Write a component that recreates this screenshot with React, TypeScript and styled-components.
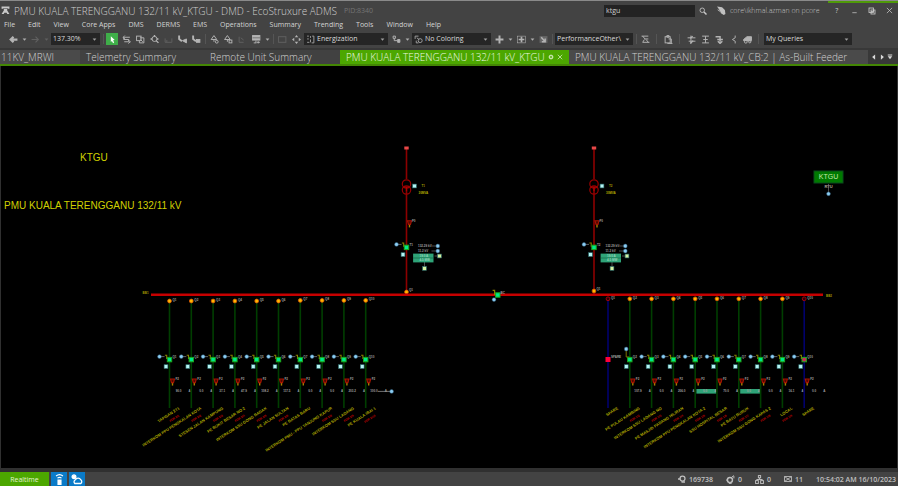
import React from 'react';
import styled, { createGlobalStyle, css } from 'styled-components';

const GlobalStyle = createGlobalStyle`
  * { box-sizing: border-box; }
  html, body { margin: 0; background: #434343; }
  body, button, input, select {
    font-family: 'Open Sans', 'Noto Sans', sans-serif;
    font-size: 7px;
    color: #c8c8c8;
  }
  button, input, select { border: 0; padding: 0; margin: 0; background: none; outline: none; }
`;

const Window = styled.div`
  display: flex;
  flex-direction: column;
  min-height: 100vh;
  background: #434343;
  border-top: 1px solid #8a8a8a;
`;

const TitleBar = styled.header`
  display: flex;
  align-items: center;
  height: 19px;
  padding-left: 0;
`;
const AppIcon = styled.span`
  display: flex;
  width: 14px;
  padding-left: 1px;
`;
const Title = styled.h1`
  margin: 0;
  font-size: 10px;
  line-height: 18px;
  font-weight: 300;
  color: #d0d0d0;
  white-space: nowrap;
`;
const ProcessId = styled.span`
  margin-left: 7px;
  color: #747474;
`;
const TitleRight = styled.div`
  display: flex;
  align-items: center;
  align-self: stretch;
  margin-left: auto;
`;
const SearchInput = styled.input`
  width: 91px;
  height: 12px;
  padding-left: 2px;
  background: #232323;
  color: #d0d0d0;
`;
const SearchButton = styled.button`
  display: flex;
  justify-content: center;
  width: 15px;
`;
const UserInfo = styled.div`
  display: flex;
  align-items: center;
  gap: 4px;
  width: 111px;
  margin-left: 7px;
  font-weight: 300;
  color: #c0c0c0;
  white-space: nowrap;
`;
const WindowButtons = styled.div`
  display: grid;
  grid-template-columns: repeat(4, 1fr);
  align-self: stretch;
  width: 70px;
  border-top: 2px solid #4f9a08;
  padding-bottom: 2px;
`;
const WindowButton = styled.button`
  display: flex;
  align-items: center;
  justify-content: center;
`;

const MenuBar = styled.nav`
  display: flex;
  gap: 13px;
  height: 10px;
  padding-left: 4px;
`;
const MenuItem = styled.button`
  line-height: 10px;
  font-weight: 500;
  color: #d4d4d4;
  white-space: nowrap;
`;

const Toolbar = styled.div`
  display: flex;
  align-items: center;
  height: 18px;
  padding-left: 6px;
`;
const ToolButton = styled.button<{ $dim?: boolean; $on?: boolean }>`
  display: flex;
  flex: none;
  align-items: center;
  justify-content: center;
  width: 14px;
  height: 12px;
  color: ${p => (p.$dim ? '#606060' : '#b4b4b4')};
  ${p => p.$on && css`
    background: #3fae49;
    background-clip: content-box;
    padding: 0 1px;
    color: #ffffff;
  `}
`;
const CaretButton = styled.button<{ $dim?: boolean }>`
  display: flex;
  flex: none;
  align-items: center;
  justify-content: center;
  width: 8px;
  color: ${p => (p.$dim ? '#606060' : '#b0b0b0')};
`;
const Separator = styled.span<{ $wide?: boolean }>`
  flex: none;
  width: ${p => (p.$wide ? 9 : 4)}px;
  height: 10px;
  background: linear-gradient(#555, #555) center / 1px 100% no-repeat;
`;
const Combo = styled.label<{ $width: number }>`
  display: flex;
  flex: none;
  align-items: center;
  gap: 2px;
  width: ${p => p.$width}px;
  height: 12px;
  margin: 0 1px;
  padding: 0 3px 0 2px;
  background: #252525;
  color: #a0a0a0;
`;
const ComboSelect = styled.select`
  appearance: none;
  flex: 1;
  min-width: 0;
  height: 12px;
  line-height: 12px;
  color: #dadada;
`;

const TabStrip = styled.div`
  display: flex;
  height: 18px;
  padding-top: 2px;
  background: #383838;
  border-bottom: 2px solid #438604;
`;
const Tab = styled.button<{ $width: number; $look?: 'active' | 'light'; $flush?: boolean }>`
  display: flex;
  flex: none;
  align-items: center;
  width: ${p => p.$width}px;
  padding-left: ${p => (p.$flush ? 1 : 6)}px;
  font-size: 10px;
  font-weight: 300;
  line-height: 14px;
  white-space: nowrap;
  color: ${p => (p.$look === 'active' ? '#ecf8e0' : '#d0d0d0')};
  background: ${p => (p.$look === 'active' ? '#4ca700' : p.$look === 'light' ? '#4a4a4a' : '#414141')};
`;
const TabTools = styled.span`
  display: flex;
  gap: 3px;
  margin-left: auto;
  padding-right: 6px;
`;
const TabNav = styled.div`
  display: flex;
  align-items: center;
  gap: 2px;
  margin-left: auto;
  padding-right: 5px;
`;
const TabNavButton = styled.button`
  display: flex;
  color: #d8d8d8;
`;

const Canvas = styled.main`
  flex: 1;
  background: #000;
  border: solid #303030;
  border-width: 0 1px 4px 1px;
`;
const Diagram = styled.svg`
  display: block;
  width: 100%;
  height: auto;
  font-family: 'Liberation Sans', Arial, sans-serif;
`;

const StatusBar = styled.footer`
  display: flex;
  align-items: center;
  gap: 2px;
  height: 14px;
  padding-right: 2px;
`;
const Mode = styled.button`
  width: 49px;
  height: 14px;
  background: #4ca700;
  color: #e4f4d4;
`;
const BlueButton = styled.button`
  display: flex;
  align-items: center;
  justify-content: center;
  width: 16px;
  height: 14px;
  background: #0b7bc8;
  color: #fff;
`;
const StatusItems = styled.div`
  display: flex;
  align-items: center;
  gap: 13px;
  margin-left: auto;
  font-weight: 600;
  color: #c0c0c0;
`;
const StatusItem = styled.span`
  display: flex;
  align-items: center;
  gap: 3px;
  white-space: nowrap;
`;

const glyphs: Record<string, React.ReactNode> = {
  phone: <g fill="currentColor" stroke="none"><path d="M1 1h14v4h-3V4H4v1H1z" /><path d="M5 5h6v3l4 6h-4l-1-2H6l-1 2H1l4-6z" /></g>,
  search: <><circle cx="6.5" cy="6.5" r="4.5" /><path d="M10 10l5 5" strokeWidth="3" /></>,
  hat: <g fill="currentColor" stroke="none"><path d="M0 1l9 1 5 5 1 7-3 2-5-3-2-5z" /><path d="M0 6l4 1 2 4z" /></g>,
  minimize: <path d="M3 13h10" />,
  restore: <><rect x="2" y="2" width="9" height="9" /><rect x="6" y="6" width="8" height="8" /><path d="M6 9h5V6" /></>,
  close: <path d="M2 2l12 12M14 2L2 14" />,
  back: <path d="M15 8H4M8 3L3 8l5 5" strokeWidth="4" />,
  forward: <path d="M1 8h11M8 3l5 5-5 5" strokeWidth="2" />,
  caret: <path d="M2 5h12l-6 7z" fill="currentColor" stroke="none" />,
  left: <path d="M11 1v14L3 8z" fill="currentColor" stroke="none" />,
  right: <path d="M5 1v14l8-7z" fill="currentColor" stroke="none" />,
  list: <g fill="currentColor" stroke="none"><path d="M2 1h12v3H2zM2 6h12l-6 8z" /></g>,
  pointer: <path d="M5 2l7 7-3 .5 2 4-2 1-2-4-2 2z" fill="currentColor" stroke="none" />,
  swap: <path d="M14 4H3v4h9v4H4M5 1L2 4l3 3M11 9l4 3-4 3" />,
  layers: <><rect x="1" y="2" width="8" height="8" /><path d="M7 5h7v9H6v-4M8 8l4 4" /></>,
  zoom: <><circle cx="8" cy="7" r="4.5" /><path d="M8 0v3M1 7h3M12 7h3M11 10l4 4" strokeWidth="2.5" /></>,
  tray: <path d="M2 6v7h12V6M5 13V9" />,
  step: <><path d="M2 1v6l5 4" strokeWidth="3.4" /><path d="M8 10l7-3v7z" fill="currentColor" /></>,
  stepBox: <><path d="M2 1v6l5 4" strokeWidth="3.4" /><rect x="8" y="8" width="6" height="5" fill="currentColor" /></>,
  pin: <><path d="M7 1l5 7H2zM7 8v4" /><circle cx="12" cy="12" r="2.5" /></>,
  pinMinus: <><path d="M6 1l5 7H1zM6 8v4" /><rect x="9" y="9" width="5" height="5" /></>,
  bracket: <path d="M2 3v10h8M5 5l5 4" />,
  screen: <><rect x="1" y="1" width="13" height="8" fill="currentColor" /><path d="M1 5h13" stroke="#434343" strokeWidth="1" /><path d="M3 14h5M7 10v4M11 11v4M9 13h5" /></>,
  panel: <rect x="1" y="3" width="13" height="10" />,
  cross4: <g fill="currentColor" stroke="none"><path d="M8 0l3 4H5zM8 16l3-4H5zM0 8l4-3v6zM16 8l-4-3v6z" /></g>,
  grid: <><path d="M2 2h3M2 7h3M2 13h4M8 2v3M8 8v5M11 2h3v12h-4" /></>,
  nodes: <><path d="M2 2h4v4H2zM4 7v3h5" /><path d="M10 8h4v5h-4z" fill="currentColor" /></>,
  colors: <><path d="M2 7V2h6M5 5l4 3" /><circle cx="11" cy="10" r="3.5" /><path d="M4 10v4h4" /></>,
  plus: <path d="M8 1v14M1 8h14M5 8h6" strokeWidth="3.5" />,
  plusBox: <><rect x="1" y="2" width="14" height="12" strokeWidth="1" /><path d="M8 3v10M3 8h10" strokeWidth="3" /></>,
  arrowBox: <><rect x="1" y="2" width="14" height="12" fill="#666" stroke="none" /><path d="M4 4l7 8M11 6v6H5" strokeWidth="2.5" /></>,
  sigma: <path d="M1 2h12M3 2l4 5h6M6 8l-3 5h12M9 8l4 5" />,
  clip: <><rect x="2" y="3" width="9" height="11" /><path d="M5 1h4v3H5zM8 7h5v8M6 15h9" /></>,
  split: <><path d="M1 5h14M3 11h12M7 1v14" /><path d="M10 2l-4 4M11 10l-5 5" strokeWidth="2.5" /></>,
  beam: <path d="M2 2h12M2 14h12M8 2v12M4 8h8" />,
  drop: <path d="M1 3h8v9M4 8h10M5 11l4 4 4-4" strokeWidth="2.5" />,
  angle: <path d="M11 1v4L6 8l5 3v4" />,
  truck: <><path d="M1 8l6-5h8v7H1z" fill="currentColor" /><circle cx="5" cy="12" r="2.5" /><circle cx="12" cy="12" r="2" /></>,
  dot: <><circle cx="8" cy="8" r="5" strokeWidth="2.5" /><path d="M6 8h4" /></>,
  beacon: <><path d="M3 3q5-4 10 0M5 6q3-2 6 0" /><rect x="5" y="8" width="6" height="8" fill="currentColor" stroke="none" /></>,
  weather: <><path d="M5 14h8a3 3 0 0 0 0-5 4 4 0 0 0-7 0 3 3 0 0 0-1 5z" /><circle cx="4" cy="5" r="2.5" fill="currentColor" /></>,
  refresh: <><circle cx="9" cy="7" r="5" strokeWidth="2.5" /><path d="M0 8h5M7 14h7" strokeWidth="3" /></>,
  alarm: <><circle cx="7" cy="9" r="4.5" strokeWidth="2.5" /><path d="M10 4l4-3M0 9h3M14 2v4M5 15h5" /></>,
  tree: <><rect x="6" y="1" width="4" height="4" /><rect x="1" y="10" width="5" height="5" /><rect x="10" y="10" width="5" height="5" /><path d="M8 5v3M3 10V8h10v2" /></>,
  mail: <><path d="M1 3h14v10H1zM1 3l14 10M15 3L1 13" /></>,
};

function Glyph({ name, size = 10 }: { name: string; size?: number }) {
  return (
    <svg width={size} height={size} viewBox="0 0 16 16" fill="none" stroke="currentColor" strokeWidth="1.7" aria-hidden="true">
      {glyphs[name]}
    </svg>
  );
}

const menus = ['File', 'Edit', 'View', 'Core Apps', 'DMS', 'DERMS', 'EMS', 'Operations', 'Summary', 'Trending', 'Tools', 'Window', 'Help'];

function Tool({ icon, dim, on }: { icon: string; dim?: boolean; on?: boolean }) {
  return <ToolButton type="button" aria-label={icon} $dim={dim} $on={on}><Glyph name={icon} size={9} /></ToolButton>;
}
function Caret({ dim }: { dim?: boolean }) {
  return <CaretButton type="button" aria-label="More" $dim={dim}><Glyph name="caret" size={5} /></CaretButton>;
}
function Drop({ value, width, icon, label }: { value: string; width: number; icon?: string; label: string }) {
  return (
    <Combo $width={width}>
      {icon && <Glyph name={icon} size={9} />}
      <ComboSelect aria-label={label}><option>{value}</option></ComboSelect>
      <Glyph name="caret" size={5} />
    </Combo>
  );
}

const SPACING = 21.8;
const leftFeeders = [
  { name: 'TAPISAN 2T1', value: '90.0', tag: 'FDR 2/1' },
  { name: 'INTERKOM PPU PENGKALAN KOTA', value: '0.0', tag: 'FDR 2/2' },
  { name: 'STESEN JALAN KAMPUNG', value: '37.1', tag: 'FDR 2/3' },
  { name: 'PE BUKIT BESAR NO 2', value: '47.9', tag: 'FDR 2/4' },
  { name: 'INTERKOM SSU GONG BADAK', value: '108.2', tag: 'FDR 2/5' },
  { name: 'PE JALAN SULTAN', value: '117.5', tag: 'FDR 2/6' },
  { name: 'PE BATAS BARU', value: '0.0', tag: '' },
  { name: 'INTERKOM PMU - PPU TANJUNG KAPUR', value: '0.0', tag: 'FDR 2/8' },
  { name: 'INTERKOM SSU LADANG', value: '203.2', tag: 'FDR 2/9' },
  { name: 'PE KUALA IBAI 1', value: '100.0', tag: 'FDR 2/10' },
];
const rightFeeders = [
  { name: 'SPARE', value: '', tag: '' },
  { name: 'PE PULAU KAMBING', value: '107.9', tag: 'FDR 1/2' },
  { name: 'INTERKOM SSU LADANG NO', value: '0.0', tag: 'FDR 1/3' },
  { name: 'PE MASJID PADANG HILIRAN', value: '206.0', tag: 'FDR 1/4' },
  { name: 'INTERKOM PPU PENGKALAN KOTA 2', value: '0.0', tag: 'FDR 1/5' },
  { name: 'SSU HOSPITAL BESAR', value: '70.0', tag: 'FDR 1/6' },
  { name: 'PE BATU BURUK', value: '0.0', tag: 'FDR 1/7' },
  { name: 'INTERKOM SSU GONG KAPAS 2', value: '0.0', tag: 'FDR 1/8' },
  { name: 'LOCAL', value: '16.1', tag: 'FDR 1/9' },
  { name: 'SPARE', value: '0.0', tag: '' },
];

const Dot = ({ x, y }: { x: number; y: number }) => <circle cx={x} cy={y} r="1.9" fill="#8ccdf2" stroke="#2c5a78" strokeWidth=".5" />;
const Square = ({ x, y, fill = '#b4f4f4' }: { x: number; y: number; fill?: string }) => (
  <rect x={x - 1.9} y={y - 1.9} width="3.8" height="3.8" fill={fill} stroke="#2c6c6c" strokeWidth=".6" />
);
const Breaker = ({ x, y, fill = '#00e88c' }: { x: number; y: number; fill?: string }) => (
  <rect x={x - 2.2} y={y - 2.2} width="4.4" height="4.4" fill={fill} stroke="#1ca81c" strokeWidth="1" />
);
const Source = ({ x, y }: { x: number; y: number }) => <circle cx={x} cy={y} r="1.9" fill="#ffb800" stroke="#e05800" strokeWidth=".8" />;
const Tiny = ({ x, y, children, fill = '#a0a0a0', end }: { x: number; y: number; children: React.ReactNode; fill?: string; end?: boolean }) => (
  <text x={x} y={y} fontSize="3" fontWeight="700" fill={fill} textAnchor={end ? 'end' : 'start'}>{children}</text>
);
const Fault = ({ x, y }: { x: number; y: number }) => (
  <g>
    <path d={`M${x} ${y + 1}v4`} stroke="#a88000" strokeWidth="1.4" />
    <path d={`M${x - 2} ${y - 1.6}h4l-1 3.6h-2z`} fill="#500800" stroke="#a81400" strokeWidth="1.1" />
  </g>
);
const Control = ({ x, y }: { x: number; y: number }) => (
  <g>
    <path d={`M${x - 10} ${y - 3}h5`} stroke="#888" strokeWidth=".7" />
    <path d={`M${x - 4.6} ${y - 4.4}h1.8v3.2h2`} stroke="#8a8000" strokeWidth="1.1" fill="none" />
    <Dot x={x - 10} y={y - 3} />
  </g>
);

function Feeder({ x, top, name, tag, value, kind = 'live', label }: {
  x: number; top: number; name: string; tag: string; value: string; kind?: 'live' | 'spare' | 'empty' | 'raised'; label: string;
}) {
  const dead = kind === 'spare' || kind === 'empty';
  return (
    <g>
      <path d={`M${x} ${top}V408`} stroke={dead ? '#00006c' : '#003e00'} strokeWidth="1.6" />
      {dead ? <circle cx={x} cy={top} r="1.9" fill="#300000" stroke="#9c0010" strokeWidth="1" /> : <Source x={x} y={top} />}
      <Tiny x={x + 3} y={top}>{label}</Tiny>
      {kind === 'empty' ? (
        <>
          <rect x={x - 2.5} y="357" width="5" height="5" fill="#ff0038" />
          <Tiny x={x + 3} y={358}>SPARE</Tiny>
        </>
      ) : (
        <>
          {kind === 'raised' ? (
            <>
              <path d={`M${x - 3.6} 349v8h3`} stroke="#8a8000" strokeWidth=".9" fill="none" />
              <Dot x={x - 3.6} y={349} />
            </>
          ) : <Control x={x} y={359.6} />}
          <Breaker x={x} y={359.6} fill={kind === 'spare' ? '#d02858' : undefined} />
          <Tiny x={x + 3} y={358}>{label}</Tiny>
          <Square x={x - 3.5} y={366.6} />
          <Fault x={x + 3} y={380.6} />
          <Tiny x={x + 6} y={380}>F2</Tiny>
          <Tiny x={x + 12} y={392.4} end>{value}</Tiny>
          <Tiny x={x + 19} y={392.4}>A</Tiny>
        </>
      )}
      <text transform={`translate(${x + 10.4} 409) rotate(-33)`} fontSize="4" fontWeight="700" textAnchor="end" fill="#b0aa00">{name}</text>
      {tag && <text transform={`translate(${x + 10} 416) rotate(-33)`} fontSize="3" fontWeight="700" textAnchor="end" fill="#c40000">{tag}</text>}
    </g>
  );
}

function Transformer({ x, label, sourceY }: { x: number; label: string; sourceY: number }) {
  return (
    <g>
      <path d={`M${x} 148V179M${x} 187V294`} stroke="#8c0000" strokeWidth="1.6" />
      <rect x={x - 2.2} y="146.5" width="4.4" height="3" fill="#e84848" />
      <circle cx={x} cy="184" r="4.2" fill="none" stroke="#960000" strokeWidth="1.2" />
      <circle cx={x} cy="190" r="4.2" fill="none" stroke="#960000" strokeWidth="1.2" />
      <path d={`M${x - 3} 187h6M${x} 187v4`} stroke="#b00000" strokeWidth="1.2" />
      <Square x={x + 8} y={186} />
      <Tiny x={x + 15} y={187} fill="#a09a00">{label}</Tiny>
      <Tiny x={x + 12} y={193.6} fill="#b8b000">30MVA</Tiny>
      <Fault x={x + 3} y={222.4} />
      <Tiny x={x + 5.5} y={221.6}>F0</Tiny>
      <Control x={x} y={247.4} />
      <Breaker x={x} y={247.4} />
      <Tiny x={x + 3} y={246}>{label}</Tiny>
      <Square x={x - 3.5} y={254.6} />
      <Tiny x={x + 11.5} y={247}>132.29 kV</Tiny>
      <Tiny x={x + 11.5} y={252}>11.2  kV</Tiny>
      <path d={`M${x + 25} 246h6M${x + 25} 251h6M${x + 28} 256h4M${x + 18} 262v5`} stroke="#808080" strokeWidth=".6" />
      <Dot x={x + 31.3} y={246} />
      <Dot x={x + 31.3} y={251} />
      <rect x={x + 6.6} y="253.6" width="20.4" height="8.8" fill="#2fa478" />
      <path d={`M${x + 6.6} 258h20.4`} stroke="#0d5c3c" strokeWidth=".6" />
      <Tiny x={x + 13} y={256.8} fill="#94d4b8">19.0  A</Tiny>
      <Tiny x={x + 13} y={261.4} fill="#94d4b8">4.5  MW</Tiny>
      <Square x={x + 33} y={256} fill="#d4f0a0" />
      <Square x={x + 18} y={268.4} fill="#d4f0a0" />
      <Source x={x} y={sourceY} />
      <Tiny x={x + 2.5} y={sourceY - 1.4}>Q1</Tiny>
    </g>
  );
}

function NetworkDiagram() {
  return (
    <Diagram viewBox="1 66 896 402" role="img" aria-label="PMU Kuala Terengganu single line diagram">
      <g fill="#d0d000" fontSize="10">
        <text x="80" y="161">KTGU</text>
        <text x="4" y="209">PMU KUALA TERENGGANU 132/11 kV</text>
      </g>
      <rect x="814" y="171" width="29" height="12" fill="#007a00" stroke="#0a4c1c" strokeWidth="1" />
      <text x="828.5" y="179.4" fontSize="7" textAnchor="middle" fill="#c4e8a8">KTGU</text>
      <text x="828.5" y="188" fontSize="4" fontWeight="700" textAnchor="middle" fill="#b0a898">RTU</text>
      <path d="M828.5 184v9" stroke="#707070" strokeWidth=".7" />
      <Dot x={828.5} y={193.8} />

      {leftFeeders.map((f, i) => (
        <Feeder key={i} x={169.5 + SPACING * i} top={i < 6 ? 301 : 300.4} label={`Q${i + 1}`} {...f} />
      ))}
      {[696.4, 740.2].map(x => <rect key={x} x={x} y="389" width="20" height="4.6" fill="#2fa478" />)}
      {rightFeeders.map((f, i) => (
        <Feeder key={i} x={608 + SPACING * i} top={298.8} label={`Q${i + 1}`}
          kind={i === 0 ? 'empty' : i === 9 ? 'spare' : i === 1 ? 'raised' : 'live'} {...f} />
      ))}
      <path d="M378 391.4h13" stroke="#909090" strokeWidth=".8" />
      <Dot x={391.6} y={391.4} />

      <Transformer x={406.5} label="T1" sourceY={292} />
      <Transformer x={594} label="T2" sourceY={291} />

      <path d="M151 294.8H823" stroke="#c60000" strokeWidth="2.4" />
      <Tiny x={142.6} y={293.8} fill="#a09a00">BB1</Tiny>
      <Tiny x={826} y={297} fill="#a09a00">BB2</Tiny>
      <path d="M492.6 290.4h2v4h3" stroke="#8a8000" strokeWidth="1.2" fill="none" />
      <Breaker x={497.8} y={295} />
      <Tiny x={500.5} y={293.6}>BC</Tiny>
      <Dot x={494} y={299.6} />
    </Diagram>
  );
}

export default function App() {
  return (
    <Window>
      <GlobalStyle />
      <TitleBar>
        <AppIcon><Glyph name="phone" size={9} /></AppIcon>
        <Title>PMU KUALA TERENGGANU 132/11 kV_KTGU - DMD - EcoStruxure ADMS</Title>
        <ProcessId>PID:8340</ProcessId>
        <TitleRight>
          <SearchInput aria-label="Search" defaultValue="ktgu" />
          <SearchButton type="button" aria-label="Search"><Glyph name="search" size={8} /></SearchButton>
          <UserInfo><Glyph name="hat" size={9} />core\ikhmal.azman on pcore</UserInfo>
          <WindowButtons>
            <WindowButton type="button">?</WindowButton>
            <WindowButton type="button" aria-label="Minimize"><Glyph name="minimize" size={7} /></WindowButton>
            <WindowButton type="button" aria-label="Restore"><Glyph name="restore" size={8} /></WindowButton>
            <WindowButton type="button" aria-label="Close"><Glyph name="close" size={7} /></WindowButton>
          </WindowButtons>
        </TitleRight>
      </TitleBar>
      <MenuBar>{menus.map(m => <MenuItem type="button" key={m}>{m}</MenuItem>)}</MenuBar>
      <Toolbar>
        <Tool icon="back" /><Caret /><Tool icon="forward" dim /><Caret dim />
        <Drop label="Zoom level" value="137.30%" width={49} />
        <Separator />
        <Tool icon="pointer" on /><Tool icon="swap" /><Tool icon="layers" /><Tool icon="zoom" /><Tool icon="tray" dim />
        <Tool icon="step" /><Tool icon="stepBox" />
        <Separator />
        <Tool icon="pin" /><Tool icon="pinMinus" /><Tool icon="bracket" dim /><Tool icon="screen" /><Caret />
        <Separator />
        <Tool icon="panel" dim /><Tool icon="cross4" />
        <Drop label="View mode" value="Energization" width={84} icon="grid" />
        <Tool icon="nodes" /><Caret />
        <Drop label="Coloring" value="No Coloring" width={79} icon="colors" />
        <Tool icon="plus" /><Caret /><Tool icon="plusBox" /><Caret /><Tool icon="arrowBox" />
        <Separator />
        <Drop label="Layer" value="PerformanceOther\" width={78} />
        <Separator />
        <Tool icon="sigma" />
        <Separator $wide />
        <Tool icon="clip" />
        <Separator $wide />
        <Tool icon="split" /><Tool icon="beam" /><Tool icon="drop" /><Tool icon="angle" /><Tool icon="truck" />
        <Separator $wide />
        <Drop label="Queries" value="My Queries" width={88} />
      </Toolbar>
      <TabStrip>
        <Tab type="button" $width={80} $look="light" $flush>11KV_MRWI</Tab>
        <Tab type="button" $width={124}>Telemetry Summary</Tab>
        <Tab type="button" $width={136}>Remote Unit Summary</Tab>
        <Tab type="button" $width={229} $look="active">
          PMU KUALA TERENGGANU 132/11 kV_KTGU
          <TabTools><Glyph name="dot" size={6} /><Glyph name="close" size={6} /></TabTools>
        </Tab>
        <Tab type="button" $width={299} $look="light">PMU KUALA TERENGGANU 132/11 kV_CB:2 | As-Built Feeder</Tab>
        <TabNav>
          <TabNavButton type="button" aria-label="Previous tab"><Glyph name="left" size={6} /></TabNavButton>
          <TabNavButton type="button" aria-label="Next tab"><Glyph name="right" size={6} /></TabNavButton>
          <TabNavButton type="button" aria-label="Tab list"><Glyph name="list" size={6} /></TabNavButton>
        </TabNav>
      </TabStrip>
      <Canvas><NetworkDiagram /></Canvas>
      <StatusBar>
        <Mode type="button">Realtime</Mode>
        <BlueButton type="button" aria-label="Signal"><Glyph name="beacon" size={11} /></BlueButton>
        <BlueButton type="button" aria-label="Weather"><Glyph name="weather" size={12} /></BlueButton>
        <StatusItems>
          <StatusItem><Glyph name="refresh" size={8} />169738</StatusItem>
          <StatusItem><Glyph name="alarm" size={9} />0</StatusItem>
          <StatusItem><Glyph name="tree" size={9} />0</StatusItem>
          <StatusItem><Glyph name="mail" size={8} />11</StatusItem>
          <StatusItem>10:54:02 AM 16/10/2023</StatusItem>
        </StatusItems>
      </StatusBar>
    </Window>
  );
}
